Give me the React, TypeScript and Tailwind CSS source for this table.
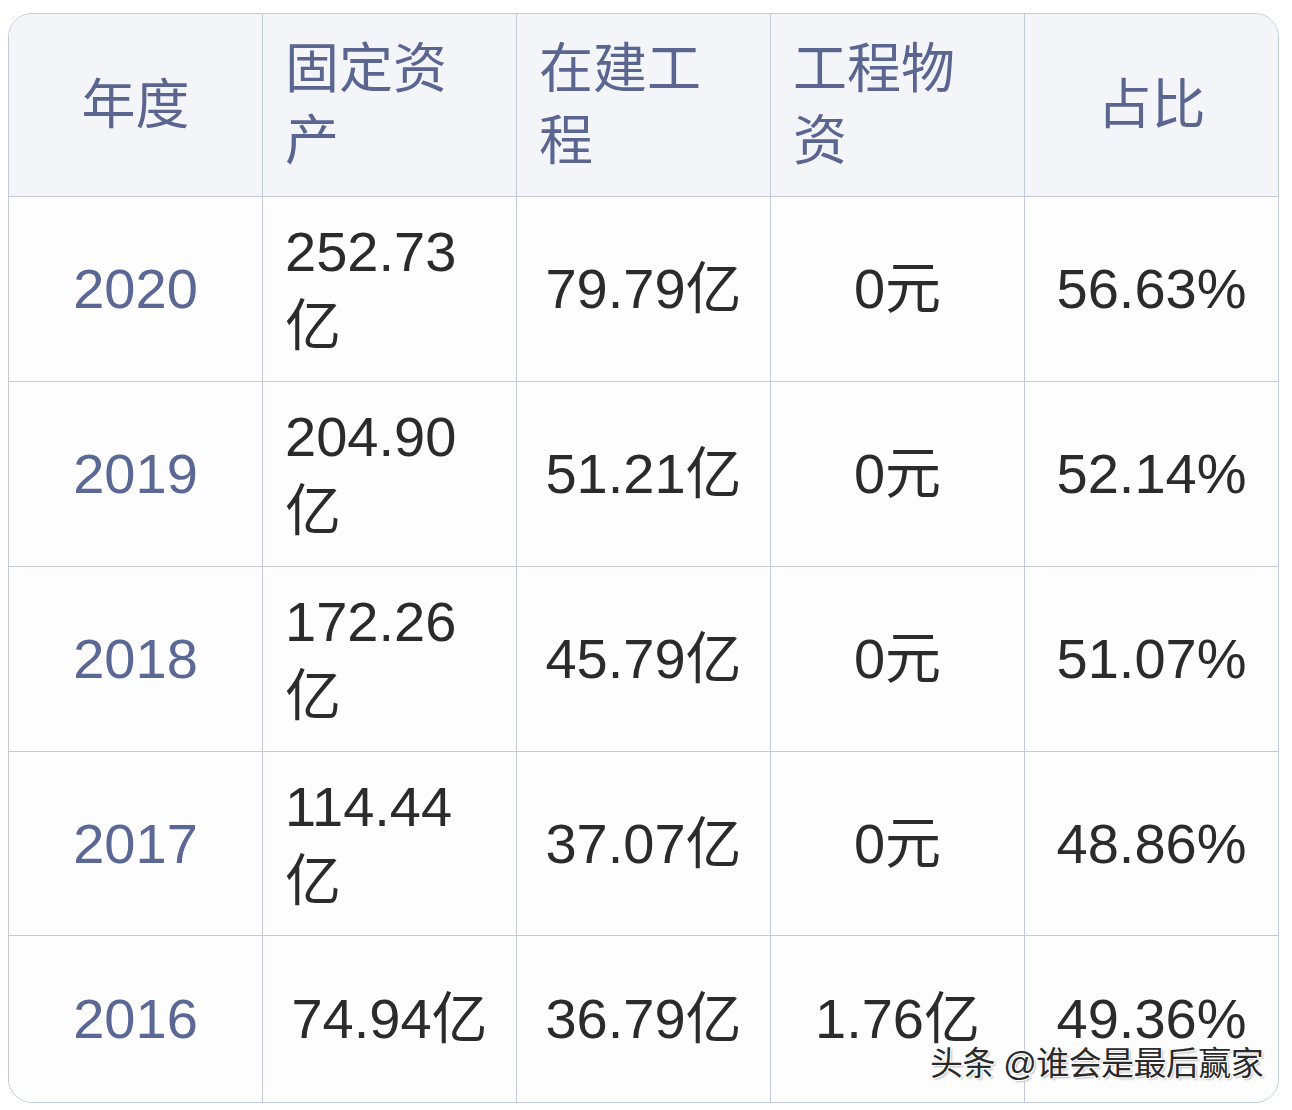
import React from "react";

const HEAD = ["年度", "固定资产", "在建工程", "工程物资", "占比"];

const ROWS = [
  { year: "2020", fixed: "252.73亿", building: "79.79亿", material: "0元", ratio: "56.63%", h: "h-[185px]" },
  { year: "2019", fixed: "204.90亿", building: "51.21亿", material: "0元", ratio: "52.14%", h: "h-[185px]" },
  { year: "2018", fixed: "172.26亿", building: "45.79亿", material: "0元", ratio: "51.07%", h: "h-[185px]" },
  { year: "2017", fixed: "114.44亿", building: "37.07亿", material: "0元", ratio: "48.86%", h: "h-[184px]" },
  { year: "2016", fixed: "74.94亿", building: "36.79亿", material: "1.76亿", ratio: "49.36%", h: "h-[166px]" },
];

function Cell({
  children,
  className = "",
  last = false,
}: {
  children: React.ReactNode;
  className?: string;
  last?: boolean;
}) {
  return (
    <div
      className={`flex items-center justify-center px-[22px] ${last ? "" : "border-r border-[#c3cad8]"} ${className}`}
    >
      <div className="text-left">{children}</div>
    </div>
  );
}

export default function App() {
  return (
    <div
      className="relative h-[1110px] w-[1292px] bg-white pl-[8px] pt-[13px]"
      style={{ fontFamily: '"Liberation Sans", "Noto Sans CJK SC", sans-serif' }}
    >
      <div className="w-[1271px] overflow-hidden rounded-[24px] border border-[#c3cad8] text-[56px] leading-[74px]">
        {/* header */}
        <div className="grid h-[183px] grid-cols-[254px_254px_254px_254px_253px] border-b border-[#c3cad8] bg-[#f4f5f9] text-[54px] leading-[72px] text-[#5b6690]">
          {HEAD.map((h, i) => (
            <Cell key={h} last={i === HEAD.length - 1}>
              {h}
            </Cell>
          ))}
        </div>
        {ROWS.map((r, i) => (
          <div
            key={r.year}
            className={`grid ${r.h} grid-cols-[254px_254px_254px_254px_253px] bg-[#fdfdfe] text-[#2b2b2b] ${
              i === ROWS.length - 1 ? "" : "border-b border-[#c3cad8]"
            }`}
          >
            <Cell className="text-[#5b6794]">{r.year}</Cell>
            <Cell>{r.fixed}</Cell>
            <Cell>{r.building}</Cell>
            <Cell className="whitespace-nowrap">{r.material}</Cell>
            <Cell last>{r.ratio}</Cell>
          </div>
        ))}
      </div>

      {/* watermark */}
      <div className="absolute left-[930px] top-[1042px] whitespace-nowrap text-[33px] leading-[44px] tracking-[-0.6px] text-[#2a2a2a] [text-shadow:1px_1px_0_#fff,-1px_-1px_0_#fff,1px_-1px_0_#fff,-1px_1px_0_#fff,2px_2px_2px_#bbb]">
        头条 @谁会是最后赢家
      </div>
    </div>
  );
}
